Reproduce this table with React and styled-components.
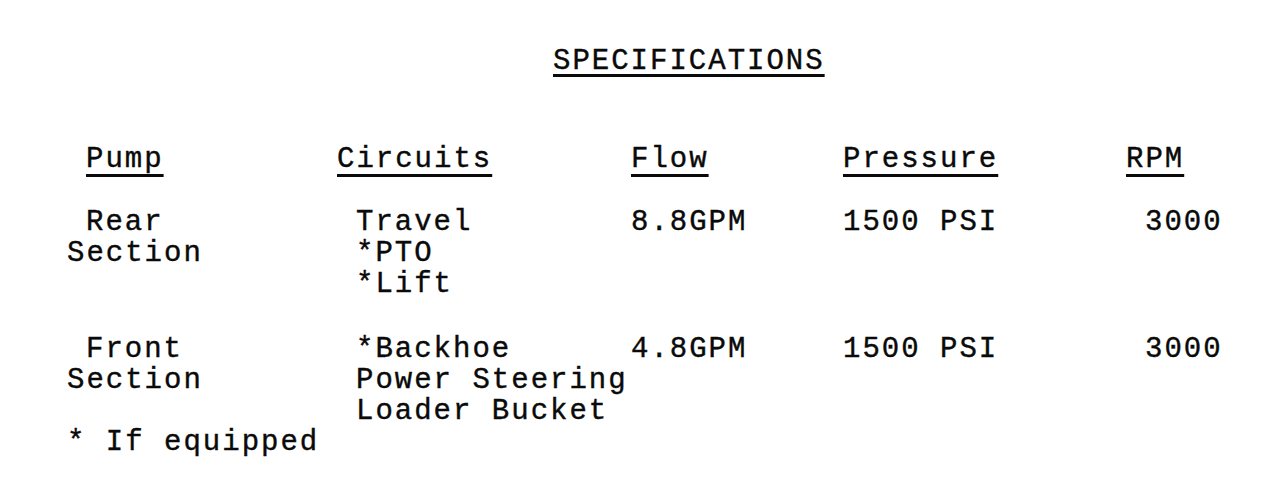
import styled, { createGlobalStyle } from "styled-components";

const GlobalStyle = createGlobalStyle`
  html, body {
    margin: 0;
    padding: 0;
    background: #fff;
  }
  body {
    font-family: "Liberation Mono", "DejaVu Sans Mono", monospace;
    font-size: 29px;
    letter-spacing: 2px;
    line-height: 31px;
    color: #0a0a0a;
    -webkit-text-stroke: 0.4px #0a0a0a;
  }
`;

const rows = [
    {
        pump: ["Rear", "Section"],
        circuits: ["Travel", "*PTO", "*Lift"],
        flow: "8.8GPM",
        pressure: "1500 PSI",
        rpm: "3000",
    },
    {
        pump: ["Front", "Section"],
        circuits: ["*Backhoe", "Power Steering", "Loader Bucket"],
        flow: "4.8GPM",
        pressure: "1500 PSI",
        rpm: "3000",
    },
];

function App() {
    return (
        <Page>
            <GlobalStyle />
            <Title>SPECIFICATIONS</Title>

            <HeaderRow>
                <Cell $indent>
                    <Heading>Pump</Heading>
                </Cell>
                <Cell>
                    <Heading>Circuits</Heading>
                </Cell>
                <Cell>
                    <Heading>Flow</Heading>
                </Cell>
                <Cell>
                    <Heading>Pressure</Heading>
                </Cell>
                <Cell>
                    <Heading>RPM</Heading>
                </Cell>
            </HeaderRow>

            <Rows>
                {rows.map((row, i) => (
                    <Grid key={i}>
                        <Cell>
                            {row.pump.map((line, j) => (
                                <Line key={j} $indent={j === 0}>{line}</Line>
                            ))}
                        </Cell>
                        <Cell $indent>
                            {row.circuits.map((line, j) => (
                                <Line key={j}>{line}</Line>
                            ))}
                        </Cell>
                        <Cell>{row.flow}</Cell>
                        <Cell>{row.pressure}</Cell>
                        <Cell $indent>{row.rpm}</Cell>
                    </Grid>
                ))}
            </Rows>

            <Footnote>* If equipped</Footnote>
        </Page>
    );
}

const Page = styled.main`
  width: 1280px;
  height: 498px;
  box-sizing: border-box;
  padding: 46px 0 0 67px;
  overflow: hidden;
`;

const underline = `
  text-decoration: underline;
  text-decoration-thickness: 3px;
  text-decoration-skip-ink: none;
`;

const Title = styled.h1`
  margin: 0 0 67px 486px;
  font: inherit;
  ${underline}
  text-underline-offset: 5px;
`;

const Grid = styled.div`
  display: grid;
  grid-template-columns: 270px 294px 212px 283px 1fr;
`;

const HeaderRow = styled(Grid)`
  margin-bottom: 32px;
`;

const Rows = styled.div`
  display: flex;
  flex-direction: column;
  gap: 34px;
`;

const Cell = styled.div`
  padding-left: ${(p) => (p.$indent ? "19px" : "0")};
  white-space: pre;
`;

const Line = styled.div`
  padding-left: ${(p) => (p.$indent ? "19px" : "0")};
`;

const Heading = styled.span`
  ${underline}
  text-underline-offset: 7px;
`;

const Footnote = styled.p`
  margin: 0;
  white-space: pre;
`;

export default App;
